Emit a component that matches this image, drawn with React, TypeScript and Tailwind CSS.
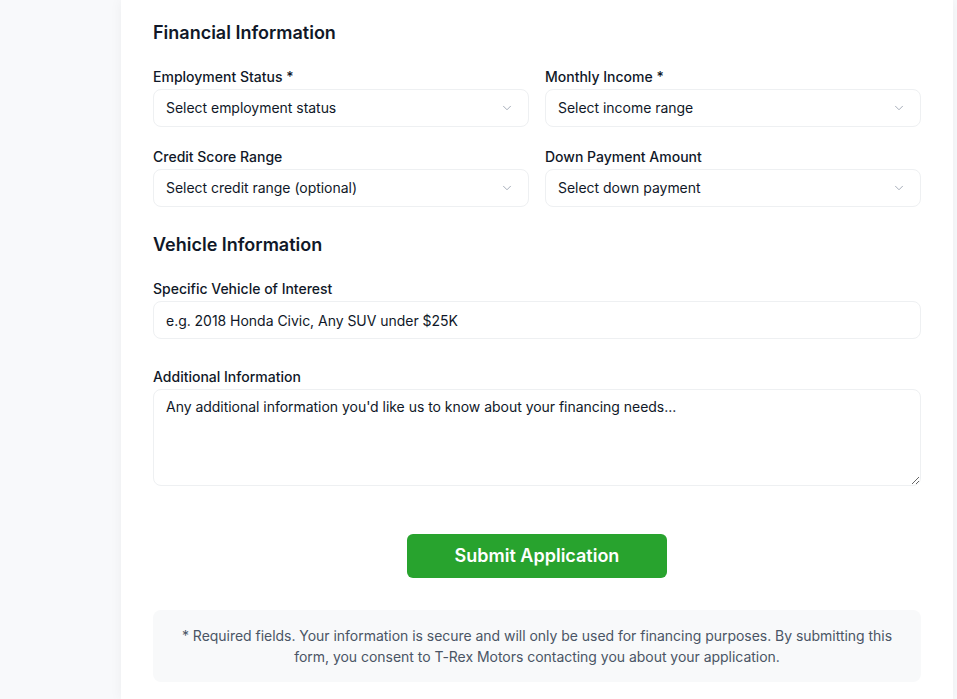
import React from "react";
import { ChevronDown } from "lucide-react";

const SelectField = ({ label, placeholder }: { label: string; placeholder: string }) => (
  <div className="flex flex-col">
    <label className="text-sm font-medium text-gray-900 leading-5 mb-[2px]">{label}</label>
    <div className="flex items-center justify-between h-[38px] border border-[#eef0f2] rounded-lg bg-white pl-[12px] pr-[14px]">
      <span className="text-sm text-gray-900 tracking-[-0.03px]">{placeholder}</span>
      <ChevronDown className="w-[14px] h-[14px] text-gray-400" strokeWidth={1.5} />
    </div>
  </div>
);

const App = () => {
  return (
    <div className="min-h-screen bg-[#f8f9fb] flex" style={{ fontFamily: "Inter, 'Noto Sans', sans-serif" }}>
      <div className="w-[121px] shrink-0" />
      <main className="w-[832px] bg-white shadow-[0_0_12px_rgba(0,0,0,0.05)] px-8 pt-[19px] pb-[18px]">
        <h2 className="text-lg font-semibold text-gray-900 leading-7 mb-5">Financial Information</h2>
        <div className="grid grid-cols-2 gap-x-4 gap-y-5">
          <SelectField label="Employment Status *" placeholder="Select employment status" />
          <SelectField label="Monthly Income *" placeholder="Select income range" />
          <SelectField label="Credit Score Range" placeholder="Select credit range (optional)" />
          <SelectField label="Down Payment Amount" placeholder="Select down payment" />
        </div>

        <h2 className="text-lg font-semibold text-gray-900 leading-7 mt-6 mb-5">Vehicle Information</h2>
        <div className="flex flex-col">
          <label className="text-sm font-medium text-gray-900 leading-5 mb-[2px]">Specific Vehicle of Interest</label>
          <input
            type="text"
            placeholder="e.g. 2018 Honda Civic, Any SUV under $25K"
            className="h-[38px] border border-[#eef0f2] rounded-lg px-[12px] text-sm tracking-[-0.03px] text-gray-900 placeholder:text-gray-900 outline-none"
          />
        </div>

        <div className="flex flex-col mt-7">
          <label className="text-sm font-medium text-gray-900 leading-5 mb-[2px]">Additional Information</label>
          <textarea
            placeholder="Any additional information you'd like us to know about your financing needs..."
            className="h-[97px] border border-[#eef0f2] rounded-lg px-[12px] pt-[5px] text-sm leading-6 tracking-[-0.03px] text-gray-900 placeholder:text-gray-900 outline-none"
          />
        </div>

        <div className="flex justify-center mt-12">
          <button className="w-[260px] h-[44px] rounded-md bg-[#28a32e] text-white text-lg font-semibold">
            Submit Application
          </button>
        </div>

        <div className="mt-8 bg-[#f8f9fa] rounded-lg px-6 py-[15px] text-center text-sm leading-[21px] tracking-[-0.03px] text-gray-600">
          * Required fields. Your information is secure and will only be used for financing purposes. By submitting this
          form, you consent to T-Rex Motors contacting you about your application.
        </div>
      </main>
      <div className="flex-1" />
    </div>
  );
};

export default App;
